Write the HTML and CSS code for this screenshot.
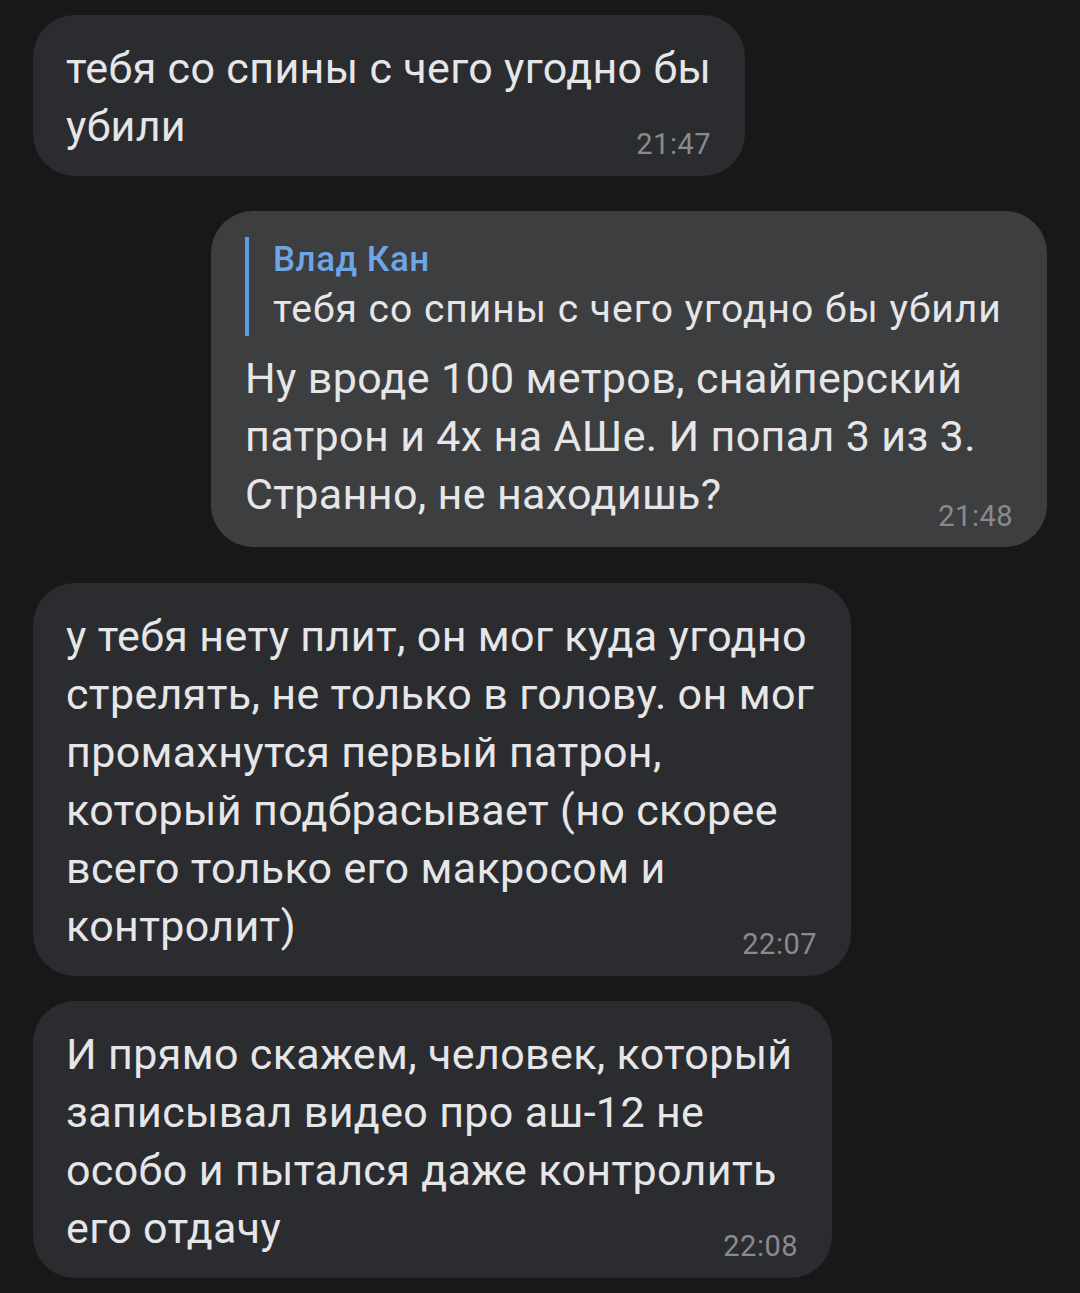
FILE: index.html
```html
<!DOCTYPE html>
<html lang="ru">
<head>
<meta charset="utf-8">
<link rel="stylesheet" href="styles.css">
</head>
<body>
<div class="chat">
  <div class="bubble in b1">
    <div class="text">тебя со спины с чего угодно бы<br>убили</div>
    <div class="time">21:47</div>
  </div>
  <div class="bubble out b2">
    <div class="reply">
      <div class="reply-name">Влад Кан</div>
      <div class="reply-text">тебя со спины с чего угодно бы убили</div>
    </div>
    <div class="text">Ну вроде 100 метров, снайперский<br>патрон и 4х на АШе. И попал 3 из 3.<br>Странно, не находишь?</div>
    <div class="time">21:48</div>
  </div>
  <div class="bubble in b3">
    <div class="text">у тебя нету плит, он мог куда угодно<br>стрелять, не только в голову. он мог<br>промахнутся первый патрон,<br>который подбрасывает (но скорее<br>всего только его макросом и<br>контролит)</div>
    <div class="time">22:07</div>
  </div>
  <div class="bubble in b4">
    <div class="text">И прямо скажем, человек, который<br>записывал видео про аш-12 не<br>особо и пытался даже контролить<br>его отдачу</div>
    <div class="time">22:08</div>
  </div>
</div>
</body>
</html>
```

FILE: styles.css
```css
html, body {
  margin: 0;
  padding: 0;
  background: #181818;
}
body {
  width: 1080px;
  height: 1293px;
  overflow: hidden;
  font-family: Roboto, "Noto Sans", sans-serif;
  color: #e6e6e8;
}
.chat {
  display: flex;
  flex-direction: column;
  padding: 15px 33px 0 33px;
}
.bubble {
  display: flex;
  flex-direction: column;
  box-sizing: border-box;
  border-radius: 42px;
  padding: 24px 34px 15px 33px;
}
.in {
  background: #2b2c2f;
  align-self: flex-start;
}
.out {
  background: #3d3e40;
  align-self: flex-end;
}
.text {
  font-size: 43px;
  line-height: 58px;
  letter-spacing: 0.35px;
  white-space: nowrap;
}
.time {
  align-self: flex-end;
  font-size: 29px;
  line-height: 34px;
  letter-spacing: 0.5px;
  color: #8a8a8e;
  margin-top: -28px;
}
.b1 { width: 712px; }
.b2 {
  width: 836px;
  margin-top: 35px;
  padding-left: 34px;
  padding-top: 26px;
  padding-bottom: 14px;
}
.b2 .time { margin-top: -24px; }
.b3 { width: 818px; margin-top: 36px; }
.b4 { width: 799px; margin-top: 25px; }
.reply {
  border-left: 4px solid #5b9ee6;
  padding-left: 24px;
  margin-bottom: 13px;
}
.reply-name {
  color: #6ea6e4;
  font-weight: 500;
  font-size: 35px;
  line-height: 46px;
  letter-spacing: 0.5px;
}
.reply-text {
  font-size: 39px;
  line-height: 53px;
  letter-spacing: 1px;
  white-space: nowrap;
}
```
